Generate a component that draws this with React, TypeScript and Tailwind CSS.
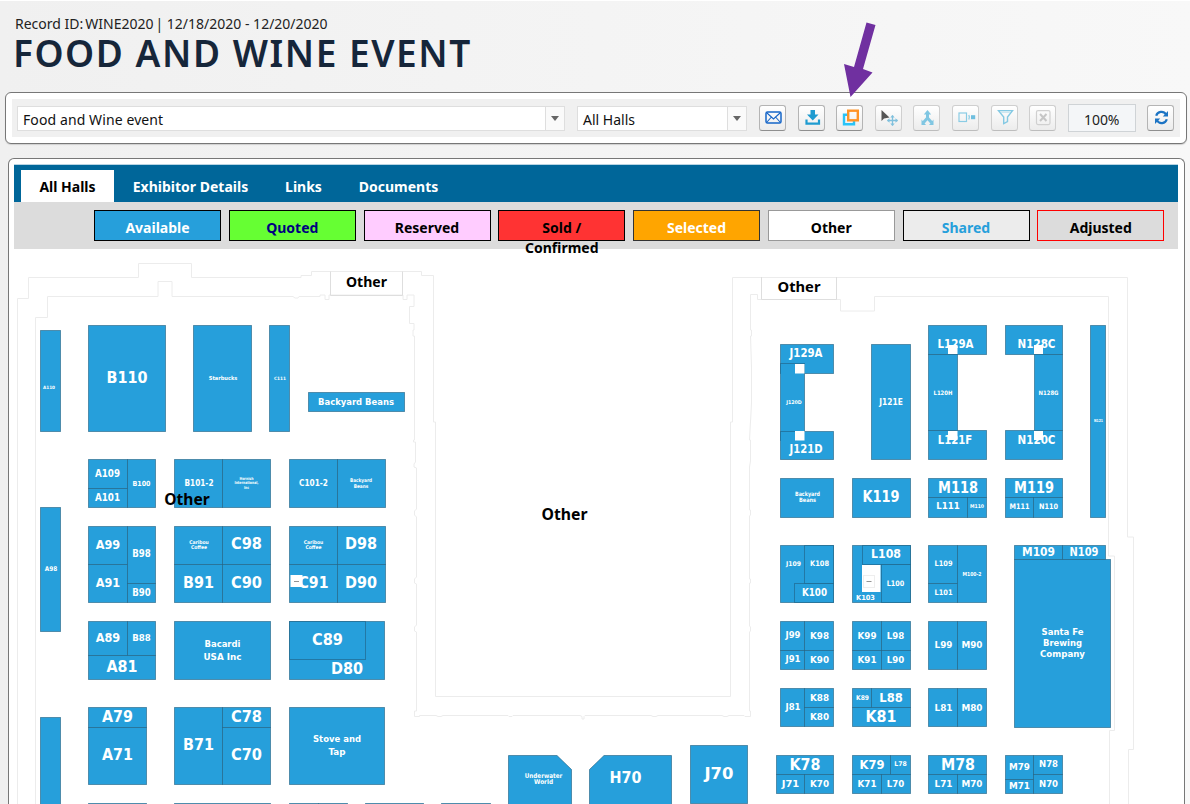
import React from "react";

type Box = [number, number, number, number];
type Label = [string, number, number, number, number];

const INK = "#269fdb";

// Booth footprints: left, top, right, bottom.
const booths: Box[] = [
  [40.5, 330, 60.5, 431],
  [88, 325, 165.5, 431],
  [193.5, 325, 251.5, 431],
  [269.5, 325, 289.5, 431],
  [308, 392, 404, 411.5],
  [88.5, 459.5, 127, 488],
  [88.5, 488, 127, 507.5],
  [127, 459.5, 155.5, 507.5],
  [174.5, 459.5, 222.5, 507.5],
  [222.5, 459.5, 270.5, 507.5],
  [289, 459.5, 337, 507.5],
  [337, 459.5, 385, 507.5],
  [40.5, 507, 60.5, 631.5],
  [88.5, 526, 127, 564.5],
  [88.5, 564.5, 127, 602.5],
  [127, 526, 155.5, 583.5],
  [127, 583.5, 155.5, 602.5],
  [174.5, 526, 222.5, 564.5],
  [222.5, 526, 270.5, 564.5],
  [174.5, 564.5, 222.5, 602.5],
  [222.5, 564.5, 270.5, 602.5],
  [289, 526, 337, 564.5],
  [337, 526, 385, 564.5],
  [289, 564.5, 337, 602.5],
  [337, 564.5, 385, 602.5],
  [88.5, 621.5, 127, 655],
  [127, 621.5, 155.5, 655],
  [88.5, 655, 155.5, 679],
  [174.5, 621.5, 270.5, 679],
  [289, 621.5, 384.5, 679],
  [289, 621.5, 365.5, 659.5],
  [88.5, 707.5, 146, 727],
  [88.5, 727, 146, 784],
  [174.5, 707.5, 222.5, 784],
  [222.5, 707.5, 270.5, 727],
  [222.5, 727, 270.5, 784],
  [289, 707.5, 384.5, 784],
  [40.5, 717, 60.5, 810],
  [88.5, 803, 146, 815],
  [174.5, 803, 270.5, 815],
  [289, 803, 318, 815],
  [318, 803, 347, 815],
  [365.5, 803, 423.5, 815],
  [441.5, 803, 490, 815],
  [690, 745.5, 747.5, 803],
  [780.5, 344.5, 833.5, 373.5],
  [780.5, 363.5, 804.5, 440.5],
  [780.5, 431, 833.5, 459.5],
  [871.5, 344.5, 910, 459.5],
  [928.5, 325.5, 986, 354],
  [928.5, 354, 957.5, 430.5],
  [928.5, 430.5, 986, 459.5],
  [1005, 325.5, 1062.5, 354],
  [1034, 354, 1062.5, 430.5],
  [1005, 430.5, 1062.5, 459.5],
  [1090.5, 325.5, 1105.5, 517],
  [780.5, 478, 833.5, 517],
  [852.5, 478, 910, 517],
  [928.5, 478, 986.5, 497.5],
  [928.5, 497.5, 967, 517],
  [967, 497.5, 986.5, 517],
  [1005, 478, 1062.5, 497.5],
  [1005, 497.5, 1033.5, 517],
  [1033.5, 497.5, 1062.5, 517],
  [780.5, 545, 833.5, 602.5],
  [804.5, 545, 833.5, 583],
  [794.5, 583, 833.5, 602.5],
  [852.5, 545, 910, 602.5],
  [862, 545, 910, 564.5],
  [881, 564.5, 910, 602.5],
  [928.5, 545, 957.5, 583.5],
  [928.5, 583.5, 957.5, 602.5],
  [957.5, 545, 986.5, 602.5],
  [1014.5, 545, 1062.5, 559.5],
  [1062.5, 545, 1105.5, 559.5],
  [1014.5, 559.5, 1110, 727],
  [780.5, 621.5, 804.5, 650.5],
  [780.5, 650.5, 804.5, 669.5],
  [804.5, 621.5, 833.5, 650.5],
  [804.5, 650.5, 833.5, 669.5],
  [852.5, 621.5, 881, 650.5],
  [852.5, 650.5, 881, 669.5],
  [881, 621.5, 910, 650.5],
  [881, 650.5, 910, 669.5],
  [928.5, 621.5, 957.5, 669.5],
  [957.5, 621.5, 986.5, 669.5],
  [780.5, 688.5, 804.5, 726.5],
  [804.5, 688.5, 833.5, 707.5],
  [804.5, 707.5, 833.5, 726.5],
  [852.5, 688.5, 871.5, 707.5],
  [871.5, 688.5, 910, 707.5],
  [852.5, 707.5, 910, 726.5],
  [928.5, 688.5, 957.5, 726.5],
  [957.5, 688.5, 986.5, 726.5],
  [776, 755, 833.5, 774.5],
  [776, 774.5, 804.5, 793.5],
  [804.5, 774.5, 833.5, 793.5],
  [852.5, 755, 890.5, 774.5],
  [890.5, 755, 910, 774.5],
  [852.5, 774.5, 881, 793.5],
  [881, 774.5, 910, 793.5],
  [928.5, 755, 986.5, 774.5],
  [928.5, 774.5, 957.5, 793.5],
  [957.5, 774.5, 986.5, 793.5],
  [1005, 755, 1033.5, 779],
  [1005, 779, 1033.5, 793.5],
  [1033.5, 755, 1062.5, 774.5],
  [1033.5, 774.5, 1062.5, 793.5],
];

// Booth captions: text, centre x, centre y, width, font size.
const labels: Label[] = [
  ["A110", 49, 387, 12, 4.5],
  ["B110", 127, 377.5, 41, 16],
  ["Starbucks", 223, 377.5, 28.5, 5.5],
  ["C111", 280, 378, 12, 4.5],
  ["Backyard Beans", 356, 401.5, 76, 9.5],
  ["A109", 107.5, 473.5, 25, 10],
  ["A101", 107.5, 497, 25, 10],
  ["B100", 141.5, 483, 18, 7],
  ["B101-2", 199, 482.5, 29, 8.5],
  ["Hornish", 246.5, 478.5, 14, 4],
  ["International,", 246.5, 483, 24, 4],
  ["Inc", 246.5, 487.5, 5, 4],
  ["C101-2", 313.5, 482.5, 29, 8.5],
  ["Backyard", 361, 480.5, 22, 5],
  ["Beans", 361, 486.5, 14.5, 5],
  ["A98", 51, 568.5, 12.5, 6.5],
  ["A99", 108, 544.5, 24.5, 12],
  ["B98", 141.5, 553.5, 18.5, 10],
  ["Caribou", 199, 542, 19.5, 5],
  ["Coffee", 199, 547.5, 16, 5],
  ["C98", 246.5, 543.5, 31, 16],
  ["Caribou", 313.5, 542, 19.5, 5],
  ["Coffee", 313.5, 547.5, 16, 5],
  ["D98", 361, 543.5, 32, 16],
  ["A91", 108, 582.5, 24.5, 12],
  ["B90", 141.5, 592.5, 18.5, 10],
  ["B91", 198.5, 582, 31, 16],
  ["C90", 246.5, 582, 31, 16],
  ["C91", 313.5, 582, 30, 16],
  ["D90", 361, 582, 32, 16],
  ["A89", 108, 637.5, 24.5, 12],
  ["B88", 141.5, 638, 18.5, 9.5],
  ["A81", 122, 666.5, 31, 16],
  ["Bacardi", 222.5, 643.5, 36, 9.5],
  ["USA Inc", 222.5, 656.5, 38, 9.5],
  ["C89", 327.5, 639, 31, 16],
  ["D80", 347, 668.5, 32, 16],
  ["A79", 117.5, 716.5, 31, 16],
  ["A71", 117.5, 754, 31, 16],
  ["B71", 198.5, 744.5, 31, 16],
  ["C78", 246.5, 716.5, 31, 16],
  ["C70", 246.5, 754, 31, 16],
  ["Stove and", 337, 739, 48, 9.5],
  ["Tap", 337, 751.5, 17, 9.5],
  ["Underwater", 543.5, 775.5, 37.5, 6.5],
  ["World", 543.5, 782, 19, 6.5],
  ["H70", 625.5, 777.5, 32, 16],
  ["J70", 719, 773, 29, 16],
  ["J129A", 806, 353, 33, 12],
  ["J120D", 794, 402, 15.5, 5],
  ["J121D", 806, 448.5, 33, 12],
  ["J121E", 891, 402, 23.5, 8.5],
  ["L129A", 955.5, 343.5, 36, 12],
  ["L120H", 943, 392.5, 19, 6],
  ["L121F", 955, 439.5, 34.5, 12],
  ["N128C", 1036.5, 343.5, 38, 12],
  ["N128G", 1048.5, 392.5, 20, 6],
  ["N120C", 1036.5, 439.5, 38, 12],
  ["N121", 1098.5, 420.5, 9, 4],
  ["Backyard", 807.5, 493.5, 25, 6],
  ["Beans", 807.5, 500, 17, 6],
  ["K119", 881, 496, 37, 15.5],
  ["M118", 958, 487, 40, 15.5],
  ["L111", 948, 506, 23.5, 9.5],
  ["M110", 977, 506.5, 14, 5],
  ["M119", 1034, 487, 40, 15.5],
  ["M111", 1019.5, 506.5, 20, 7.5],
  ["N110", 1048.5, 506.5, 19, 7.5],
  ["J109", 793.5, 564, 15, 6.5],
  ["K108", 819.5, 563.5, 19, 7.5],
  ["K100", 814.5, 592.5, 25, 10],
  ["L108", 886, 554, 30, 12],
  ["L100", 895.5, 583, 17.5, 7.5],
  ["K103", 865.5, 597.5, 19, 7],
  ["L109", 943.5, 563.5, 18, 7.5],
  ["L101", 943.5, 592, 18, 7.5],
  ["M100-2", 972, 573.5, 19, 5.5],
  ["M109", 1038.5, 552, 33, 12],
  ["N109", 1084, 552, 29, 12],
  ["Santa Fe", 1062.5, 631.5, 42, 9.5],
  ["Brewing", 1062.5, 642.5, 39, 9.5],
  ["Company", 1062.5, 654, 45, 9.5],
  ["J99", 793, 635, 15, 8.5],
  ["J91", 793, 659, 15, 8.5],
  ["K98", 819.5, 635.5, 19, 9.5],
  ["K90", 819.5, 659.5, 19, 9.5],
  ["K99", 867, 635.5, 19, 9.5],
  ["K91", 867, 659.5, 19, 9.5],
  ["L98", 895.5, 635.5, 17.5, 9.5],
  ["L90", 895.5, 659.5, 17.5, 9.5],
  ["L99", 943.5, 645, 18, 9.5],
  ["M90", 972, 645, 21, 9.5],
  ["J81", 793, 706.5, 15, 8.5],
  ["K88", 819.5, 697.5, 19, 9.5],
  ["K80", 819.5, 716.5, 19, 9.5],
  ["K89", 862.5, 698, 13, 6.5],
  ["L88", 891, 697.5, 23.5, 12.5],
  ["K81", 881, 716.5, 31, 16],
  ["L81", 943.5, 707.5, 18, 9.5],
  ["M80", 972, 707.5, 21, 9.5],
  ["K78", 805, 764, 31, 16],
  ["J71", 790.5, 783.5, 17.5, 9.5],
  ["K70", 819.5, 783.5, 19, 9.5],
  ["K79", 872, 764, 25, 12.5],
  ["L78", 900.5, 763.5, 12.5, 6.5],
  ["K71", 867, 783.5, 19, 9.5],
  ["L70", 895.5, 783.5, 17.5, 9.5],
  ["M78", 958, 764, 34, 16],
  ["L71", 943.5, 783.5, 18, 9.5],
  ["M70", 972, 783.5, 21, 9.5],
  ["M79", 1019.5, 766.5, 21, 9.5],
  ["M71", 1019.5, 785.5, 21, 9.5],
  ["N78", 1048.5, 764, 19, 9.5],
  ["N70", 1048.5, 783.5, 19, 9.5],
];

const pillars: Box[] = [
  [795, 364, 804.5, 373.5],
  [795, 431, 804.5, 440.5],
  [948, 345, 957.5, 354],
  [948, 431, 957.5, 440],
  [1034, 345, 1043, 354],
  [1034, 431, 1043, 440],
  [862, 565, 880.5, 592],
  [290.5, 575, 302.5, 587],
];

const others: Label[] = [
  ["Other", 366.5, 282, 41, 14.5],
  ["Other", 799, 286.5, 43, 15],
  ["Other", 187, 499.5, 45.5, 15.5],
  ["Other", 564.5, 514.5, 46, 15.5],
];

// Puts an edge on the middle of its pixel so that one-pixel strokes stay crisp.
const snap = (v: number) => Math.floor(v) + 0.5;

function Caption({ item, color }: { item: Label; color: string }) {
  const [text, cx, cy, width, size] = item;
  return (
    <text
      x={cx}
      y={cy + size * 0.365}
      fontSize={size}
      textAnchor="middle"
      textLength={width}
      lengthAdjust="spacingAndGlyphs"
      fill={color}
    >
      {text}
    </text>
  );
}

function FloorPlan() {
  return (
    <svg
      className="block h-[555px] w-[1164px] font-['DejaVu_Sans',sans-serif] font-bold"
      viewBox="14 249 1164 555"
    >
      <g fill="none" stroke="#ececec" strokeWidth="1">
        <path d="M17.5 810V298.5H28.5V277.5H138.5V263.5H191.5V277.5H301V275.5H311.5V271.5H421.5V275.5H433.5V422H435.5V696.5H730.5V422H732.5V277.5H1127.5V537H1133.5V749.5H1128.5V810" />
        <path d="M35.5 810V317.5H47.5V296.5H158V281.5H172V296.5H293L295 298H298L299 296.5H320V295H325V299.500H329V295H403V299.500H407V295H414V306.500H409.500V323.500H414V330H413V336H414.500V440H413.500V442H415.500V462L414 464V467L416.500 468V509L414.500 511V515L416.500 517V577L414.500 579V583L416.500 584V625L414.500 627V631L416.500 632V711H414.500V716.500H419.500V715.500H436L438 716.500H441L443 715.500H508L509 716.500H512L513 715.500H580L582 716.500V719H584V716.500L585 715.500H651L653 716.500H656L658 715.500H722L724 716.500H727L729 715.500H744L745 716.500H750.500V711H749.500V632L750.500 631V627L749.500 626V583H750.500V579H749.500V516L750.500 515V510H749.500V467L750.500 461V440H749.500L751.500 403V367L750.500 336H751.500V330H750.500V294.500H757.500V299.500H840.500V311H874.500V296.500H1108.500V556H1114.500V730.500H1109.500V810" />
      </g>
      <path d="M330.500 271.500V295.500H402.500V271.500" fill="none" stroke="#dedede" />
      <path d="M761.500 277V299.500H836.500V277" fill="none" stroke="#dedede" />
      <g fill={INK} stroke="#1f5f80" strokeOpacity="0.6">
        {booths.map(([l, t, r, b], i) => (
          <rect key={i} x={snap(l)} y={snap(t)} width={snap(r) - snap(l)} height={snap(b) - snap(t)} />
        ))}
        <path d="M508.500 755.500H557L571.500 769.500V810H508.500Z" />
        <path d="M604 755.500H671.500V810H589.500V769.500Z" />
      </g>
      {labels.map((item, i) => (
        <Caption key={i} item={item} color="#ffffff" />
      ))}
      <g fill="#ffffff">
        {pillars.map(([l, t, r, b], i) => (
          <rect key={i} x={l} y={t} width={r - l} height={b - t} />
        ))}
      </g>
      <rect x="863.500" y="575.500" width="11" height="12" fill="none" stroke="#eeeeee" />
      <path d="M866.500 581.500H871.500M294 581.500H299" stroke="#777777" strokeWidth="0.8" />
      <g className="font-['Noto_Sans',sans-serif] font-bold">
        {others.map((item, i) => (
          <Caption key={i} item={item} color="#000000" />
        ))}
      </g>
    </svg>
  );
}

function ToolButton({ children, dim = false }: { children: React.ReactNode; dim?: boolean }) {
  return (
    <button
      className={`h-[26px] w-[27px] shrink-0 rounded-[3px] border bg-gradient-to-b from-white to-[#ececec] ${
        dim ? "border-[#cfcfcf] border-b-[#bdbdbd]" : "border-[#b4b4b4] border-b-[#8f8f8f]"
      }`}
    >
      <svg className="block h-6 w-[25px]" viewBox="1 1 25 24" fill="none">
        {children}
      </svg>
    </button>
  );
}

function Combo({ text, size }: { text: string; size: string }) {
  return (
    <div className={`flex h-[25px] shrink-0 border border-[#dedede] bg-white ${size}`}>
      <span className="flex-1 pl-[5px] text-[14px] leading-[25px] text-[#111111]">{text}</span>
      <span className="flex w-[19px] items-center justify-center border-l border-[#dedede] bg-[#fafafa]">
        <svg className="h-[5px] w-2" viewBox="0 0 8 5">
          <path d="M0 0H8L4 5Z" fill="#666666" />
        </svg>
      </span>
    </div>
  );
}

const legend = [
  { text: "Available", look: "bg-[#269fdb] text-white border-black" },
  { text: "Quoted", look: "bg-[#66ff33] text-[#000080] border-black" },
  { text: "Reserved", look: "bg-[#ffccff] text-black border-black" },
  { text: "Sold / Confirmed", look: "bg-[#ff3333] text-black border-black" },
  { text: "Selected", look: "bg-[#ffa500] text-white border-[#333333]" },
  { text: "Other", look: "bg-white text-black border-[#999999]" },
  { text: "Shared", look: "bg-[#ececec] text-[#269fdb] border-black" },
  { text: "Adjusted", look: "bg-[#dcdcdc] text-black border-[#ff0000]" },
];

export default function App() {
  return (
    <div className="relative h-[804px] w-[1190px] overflow-hidden border-t border-white bg-gradient-to-r from-[#f0f0f0] via-[#f4f4f4] to-[#f8f8f8] font-['Noto_Sans',sans-serif]">
      <header className="h-[91px] pl-[15px] pt-[13px]">
        <p className="whitespace-nowrap text-[14px] leading-5 text-[#222222]">
          Record ID:<span className="ml-[2px]">WINE2020</span>
          <span className="ml-[2px]">| 12/18/2020 - 12/20/2020</span>
        </p>
        <h1 className="-ml-[2px] whitespace-nowrap text-[37px] font-semibold leading-[38px] tracking-[1.550px] text-[#16263a]">
          FOOD AND WINE EVENT
        </h1>
      </header>

      <section className="ml-[5px] h-[52px] w-[1182px] rounded-[6px] border border-[#777777] bg-white p-[6px] shadow-[0_1px_1px_#d0d0d0]">
        <div className="flex h-[38px] items-center bg-[#f0f0f0] pl-[5px]">
          <Combo text="Food and Wine event" size="w-[548px] tracking-[0.1px]" />
          <div className="ml-3 shrink-0">
            <Combo text="All Halls" size="w-[170px]" />
          </div>
          <div className="ml-[12px] flex gap-[11.600px]">
            <ToolButton>
              <rect x="7" y="7" width="15" height="11" rx="1.5" stroke="#1565c8" strokeWidth="1.5" />
              <path d="M8 8L14.500 14L21 8M8 17L12 12.500M21 17L17 12.500" stroke="#1565c8" strokeWidth="1.100" />
            </ToolButton>
            <ToolButton>
              <path d="M12.500 5H17V9.500H20.500L14.750 15.500L9 9.500H12.500Z" fill="#1e9bd0" />
              <path d="M8.500 14.500V18.700H21V14.500" stroke="#1e9bd0" strokeWidth="2.200" />
            </ToolButton>
            <ToolButton>
              <path d="M11 9.700H8V19.300H18V16" stroke="#29c3f7" strokeWidth="2.400" />
              <rect x="12.200" y="5.700" width="9.600" height="9.600" stroke="#ff9326" strokeWidth="2.400" />
            </ToolButton>
            <ToolButton dim>
              <path d="M6.500 5V16L9 13.500L14.500 12.500Z" fill="#555555" />
              <path d="M17.500 10.500V20.500M12.500 15.500H22.500" stroke="#7fc0dd" strokeWidth="1.300" />
              <path
                d="M15.300 12.500L17.500 10L19.700 12.500ZM15.300 18.500L17.500 21L19.700 18.500ZM14.500 13.300L12 15.500L14.500 17.700ZM20.500 13.300L23 15.500L20.500 17.700Z"
                fill="#7fc0dd"
              />
            </ToolButton>
            <ToolButton dim>
              <path d="M14.500 8V13L10.500 17.500M14.500 13L18.500 17.500" stroke="#7fc6e2" strokeWidth="3" />
              <path d="M10.800 9.500L14.500 5L18.200 9.500ZM8.500 14.500V20H13ZM20.500 14.500V20H16Z" fill="#7fc6e2" />
            </ToolButton>
            <ToolButton dim>
              <rect x="7" y="8" width="7.500" height="8.500" stroke="#8acce4" strokeWidth="1.200" />
              <path d="M16.800 10C17.600 11.500 17.600 13 16.800 14.500" stroke="#8acce4" strokeWidth="1.300" />
              <rect x="19" y="10.200" width="4.200" height="4" fill="#6fbfdf" />
            </ToolButton>
            <ToolButton dim>
              <path d="M7.500 5.600H21.500L16.500 12V16.500L12.700 18.500V12Z" stroke="#84c9e3" strokeWidth="1.400" />
              <path d="M10 7.200H19" stroke="#c3e3ef" strokeWidth="1.200" />
            </ToolButton>
            <ToolButton dim>
              <rect x="7.500" y="5.600" width="13.500" height="14" rx="1.500" stroke="#d0d0d0" strokeWidth="1.200" />
              <path d="M11 9L17.500 16M17.500 9L11 16" stroke="#c6c6c6" strokeWidth="2" />
            </ToolButton>
            <div className="-my-px h-7 w-[68px] border border-[#cfd3d6] bg-[#f4f6f8] pt-px text-center text-[14px] leading-[27px] tracking-[-0.1px] text-[#222222]">
              100%
            </div>
            <ToolButton>
              <path d="M9.200 10.800A5.400 5.400 0 0 1 19 9.500M19.800 14.200A5.400 5.400 0 0 1 10 15.500" stroke="#1c74c4" strokeWidth="2.200" />
              <path d="M21 6V11.500H15.800ZM8 19V13.500H13.200Z" fill="#1c74c4" />
            </ToolButton>
          </div>
        </div>
      </section>

      <main className="ml-2 mt-[14px] h-[660px] w-[1177px] rounded-t-[6px] border border-b-0 border-[#777777] bg-white pl-[5px] pr-[6px] pt-[5px]">
        <nav className="flex h-[38px] items-end border-t border-[#b8d4e3] bg-[#006699] pl-[7px] text-[14px] font-bold text-white">
          <a className="flex h-8 w-[93px] items-center justify-center bg-white text-black">All Halls</a>
          <a className="flex h-8 w-[153px] items-center justify-center">Exhibitor Details</a>
          <a className="flex h-8 w-[73px] items-center justify-center">Links</a>
          <a className="flex h-8 w-[117px] items-center justify-center">Documents</a>
        </nav>
        <div className="flex h-[47px] gap-[7.750px] bg-[#dcdcdc] pl-20 pt-2">
          {legend.map(({ text, look }) => (
            <div
              key={text}
              className={`h-[31px] w-[127px] shrink-0 border px-6 pt-[7px] text-center text-[14px] font-bold leading-[19.500px] ${look}`}
            >
              {text}
            </div>
          ))}
        </div>
        <FloorPlan />
      </main>

      <svg className="pointer-events-none absolute left-[843px] top-[21px] h-[76px] w-[34px]" viewBox="843 22 34 76">
        <path d="M866.500 22.500L875.500 25L863 69L872.500 72.500L850.500 97L844 64L854 67Z" fill="#7030a0" />
      </svg>
    </div>
  );
}
